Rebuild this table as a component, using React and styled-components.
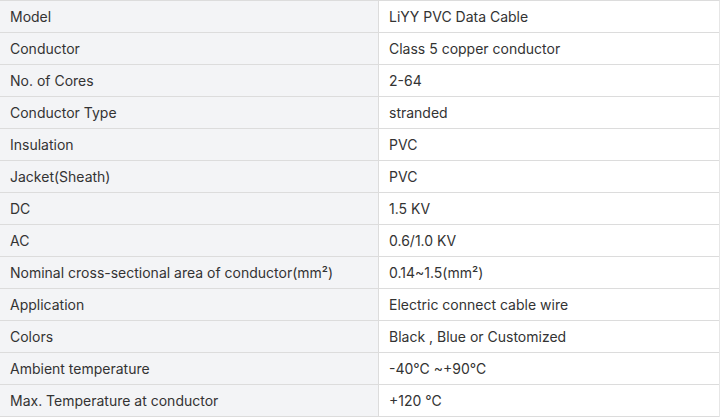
import React from 'react';
import styled, { createGlobalStyle } from 'styled-components';

const GlobalStyle = createGlobalStyle`
  body {
    margin: 0;
    background: #fff;
    font-family: Inter, "Noto Sans", sans-serif;
  }
`;

const SpecTable = styled.div`
  width: 720px;
  border-top: 1px solid #dcdcdc;
  border-right: 1px solid #e6e6e6;
  box-sizing: border-box;
`;

const Row = styled.div`
  display: grid;
  grid-template-columns: 379px 1fr;
  height: 32px;
  box-sizing: border-box;
  border-bottom: 1px solid #dcdcdc;
`;

const Cell = styled.div`
  display: flex;
  align-items: center;
  padding: 0 10px;
  font-size: 14px;
  color: #333;
  background: ${(p) => (p.$label ? '#f3f4f6' : '#fff')};
  border-right: ${(p) => (p.$label ? '1px solid #dcdcdc' : 'none')};
  white-space: nowrap;
`;

const specs = [
  ['Model', 'LiYY PVC Data Cable'],
  ['Conductor', 'Class 5 copper conductor'],
  ['No. of Cores', '2-64'],
  ['Conductor Type', 'stranded'],
  ['Insulation', 'PVC'],
  ['Jacket(Sheath)', 'PVC'],
  ['DC', '1.5 KV'],
  ['AC', '0.6/1.0 KV'],
  ['Nominal cross-sectional area of conductor(mm²)', '0.14~1.5(mm²)'],
  ['Application', 'Electric connect cable wire'],
  ['Colors', 'Black , Blue or Customized'],
  ['Ambient temperature', '-40℃ ~+90℃'],
  ['Max. Temperature at conductor', '+120 ℃'],
];

const App = () => {
  return (
    <>
      <GlobalStyle />
      <SpecTable>
        {specs.map(([label, value]) => (
          <Row key={label}>
            <Cell $label>{label}</Cell>
            <Cell>{value}</Cell>
          </Row>
        ))}
      </SpecTable>
    </>
  );
};

export default App;
